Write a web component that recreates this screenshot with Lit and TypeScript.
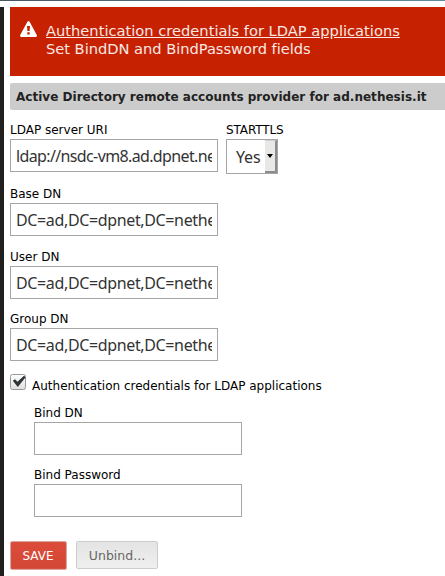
import { LitElement, html, css } from "lit";
import { customElement, property } from "lit/decorators.js";

@customElement("text-field")
class TextField extends LitElement {
  @property() label = "";
  @property() value = "";

  static styles = css`
    :host { display: block; width: 208px; height: 50px; }
    label { display: block; height: 16px; margin-bottom: 1px; font: 12px/16px "DejaVu Sans", sans-serif; color: #000; white-space: nowrap; }
    input { display: block; box-sizing: border-box; width: 208px; height: 33px; margin: 0; padding: 1px 5px 0; border: 1px solid #a6a6a6; border-radius: 0; outline: none; background: #fff; color: #333; font: 16px "Noto Sans", sans-serif; letter-spacing: var(--tracking, -0.36px); }
  `;

  render() {
    return html`<label for="input">${this.label}</label><input id="input" type="text" .value=${this.value} />`;
  }
}

@customElement("app-root")
class AppRoot extends LitElement {
  static styles = css`
    :host { display: block; width: 445px; height: 576px; overflow: hidden; background: #fff; font: 12px/16px "DejaVu Sans", sans-serif; color: #000; }
    .strip { height: 1px; background: linear-gradient(90deg, #4b545e, #506a72 34%, #5d7f8a 60%, #65899b); }
    .body { display: flex; height: 569px; margin-top: 6px; }
    .side { width: 4px; flex: none; background: #22201e; }
    .main { flex: 1; min-width: 0; padding-left: 6px; }
    .alert { display: flex; height: 69px; box-sizing: border-box; padding: 15px 0 0 10px; background: #c62100; color: #f9e8e5; font-size: 14.66px; line-height: 18px; white-space: nowrap; }
    .alert svg { flex: none; margin: -1px 9px 0 0; }
    .alert a { display: block; color: inherit; text-decoration: underline; }
    .message { letter-spacing: -0.03px; }
    .title { height: 27px; margin: 7px 0 12px; box-sizing: border-box; padding-left: 6px; border-radius: 2px 0 0 2px; background: #ccc; color: #222; font-weight: bold; line-height: 28px; letter-spacing: 0.02px; white-space: nowrap; }
    .row { display: flex; gap: 8px; height: 64px; }
    .uri { --tracking: -0.63px; }
    .user { margin-bottom: 12px; margin-top: 13px; }
    .starttls { height: 16px; margin-bottom: 1px; letter-spacing: -0.1px; }
    .select { display: flex; box-sizing: border-box; width: 52px; height: 35px; border: 1px solid #a6a6a6; color: #333; font: 16px/34px "Noto Sans", sans-serif; letter-spacing: -0.2px; }
    .value { flex: 1; padding-left: 9px; }
    .arrow { box-sizing: border-box; width: 12px; display: flex; align-items: center; justify-content: center; background: #e8e8e6; border: solid; border-width: 1px 2px 2px 0; border-color: #d0d0d0 #8c8c8c #8c8c8c; }
    .check { display: flex; height: 18px; margin-top: 13px; }
    .check svg { flex: none; margin-right: 6px; }
    .check span { padding-top: 4px; }
    .nested { display: flex; flex-direction: column; gap: 12px; margin: 13px 0 24px 24px; }
    .actions { display: flex; align-items: flex-start; gap: 9px; }
    button { box-sizing: border-box; height: 28px; margin: 0; padding: 0; border: 1px solid #ccc; border-radius: 2px; font: 12px "DejaVu Sans", sans-serif; }
    .save { width: 57px; height: 29px; padding-right: 1px; color: #fff; background: linear-gradient(#dd4b39, #d14836); border-color: #d9a6a0; box-shadow: inset 0 0 0 1px #d5503f; }
    .unbind { width: 82px; color: #666; background: linear-gradient(#e4e4e4, #efefef); font-size: 12.5px; }
  `;

  render() {
    return html`
      <div class="strip"></div>
      <div class="body">
        <div class="side"></div>
        <div class="main">
          <div class="alert">
            <svg width="17" height="16" viewBox="0 0 17 16"><path fill="#fff" fill-rule="evenodd" d="M8.5 0Q9.2 0 9.6.8L16.8 14Q17.2 15.5 16 16H1Q-.2 15.5.2 14L7.4.8Q7.8 0 8.5 0ZM7 5L7.4 10H9.6L10 5ZM7.3 11.3V13.6H9.7V11.3Z"/></svg>
            <div><a>Authentication credentials for LDAP applications</a><div class="message">Set BindDN and BindPassword fields</div></div>
          </div>
          <div class="title">Active Directory remote accounts provider for ad.nethesis.it</div>
          <div class="row">
            <text-field class="uri" label="LDAP server URI" value="ldap://nsdc-vm8.ad.dpnet.nethesis.it"></text-field>
            <div>
              <div class="starttls">STARTTLS</div>
              <div class="select"><div class="value">Yes</div><div class="arrow"><svg width="6" height="4" viewBox="0 0 6 4"><path d="M0 0H6L3 4Z"/></svg></div></div>
            </div>
          </div>
          <text-field label="Base DN" value="DC=ad,DC=dpnet,DC=nethesis,DC=it"></text-field>
          <text-field class="user" label="User DN" value="DC=ad,DC=dpnet,DC=nethesis,DC=it"></text-field>
          <text-field label="Group DN" value="DC=ad,DC=dpnet,DC=nethesis,DC=it"></text-field>
          <div class="check">
            <svg width="16" height="16" viewBox="0 0 16 16"><defs><linearGradient id="g" x2="0" y2="1"><stop stop-color="#fff"/><stop offset="1" stop-color="#dedede"/></linearGradient></defs><rect x=".5" y=".5" width="15" height="15" rx="2" fill="url(#g)" stroke="#999"/><path d="M2.8 6.8L5 5.2L7.5 7.8L14 1.8L15.6 3.3L7.8 13Z" fill="#2e3436"/></svg>
            <span>Authentication credentials for LDAP applications</span>
          </div>
          <div class="nested">
            <text-field label="Bind DN"></text-field>
            <text-field label="Bind Password"></text-field>
          </div>
          <div class="actions"><button class="save">SAVE</button><button class="unbind">Unbind...</button></div>
        </div>
      </div>
    `;
  }
}
